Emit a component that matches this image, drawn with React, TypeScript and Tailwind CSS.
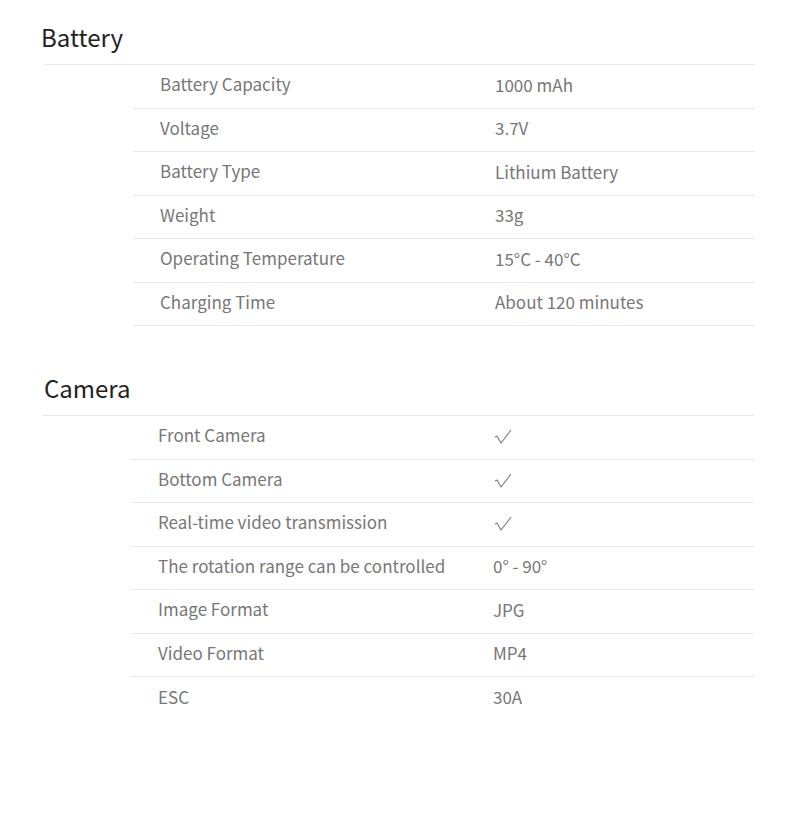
const font = { fontFamily: '"Noto Sans CJK SC", "Noto Sans", sans-serif' };

type Row = [string, string];

const CHECK = "check";

const battery: Row[] = [
  ["Battery Capacity", "1000 mAh"],
  ["Voltage", "3.7V"],
  ["Battery Type", "Lithium Battery"],
  ["Weight", "33g"],
  ["Operating Temperature", "15°C - 40°C"],
  ["Charging Time", "About 120 minutes"],
];

const camera: Row[] = [
  ["Front Camera", CHECK],
  ["Bottom Camera", CHECK],
  ["Real-time video transmission", CHECK],
  ["The rotation range can be controlled", "0° - 90°"],
  ["Image Format", "JPG"],
  ["Video Format", "MP4"],
  ["ESC", "30A"],
];

function Check() {
  return (
    <svg width="18" height="15" viewBox="0 0 18 15" className="ml-[1px] mt-[3px]">
      <polyline points="1,8 3,7 7,14 17,1" fill="none" stroke="#7a7a7a" strokeWidth="1.1" strokeLinejoin="round" />
    </svg>
  );
}

function Section({ title, rows, lastLine, className, titleClass }: { title: string; rows: Row[]; lastLine: boolean; className?: string; titleClass?: string }) {
  return (
    <section className={className}>
      <div className="border-b border-[#e8e8e8] pt-[21px] pb-[11px]">
        <h2 className={"text-[24px] leading-[32px] text-[#222] " + (titleClass ?? "")}>{title}</h2>
      </div>
      <div className="ml-[89px]">
        {rows.map(([label, value], i) => (
          <div
            key={label}
            className={
              "flex h-[43.5px] items-center text-[17px] text-[#777] " +
              (i < rows.length - 1 || lastLine ? "border-b border-[#e8e8e8]" : "")
            }
          >
            <div className="w-[362px] pl-[27px] -mt-[5px]">{label}</div>
            <div className="-mt-[4px]">{value === CHECK ? <Check /> : value}</div>
          </div>
        ))}
      </div>
    </section>
  );
}

export default function App() {
  return (
    <div className="min-h-[840px] w-[790px] bg-white" style={font}>
      <Section title="Battery" rows={battery} lastLine className="ml-[44px] w-[711px]" titleClass="-ml-[3px]" />
      <Section title="Camera" rows={camera} lastLine={false} className="mt-[25px] ml-[42px] w-[712px]" titleClass="ml-[2px]" />
    </div>
  );
}
